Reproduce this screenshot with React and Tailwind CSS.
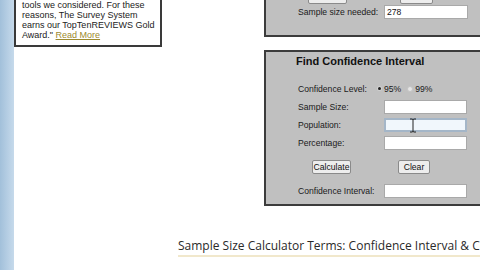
import React from "react";

function Btn({ children, className = "" }) {
  return (
    <div
      className={
        "h-[14px] flex items-center justify-center bg-[#ededed] border border-[#8a8a8a] rounded-[2px] text-[8.6px] text-[#111] " +
        className
      }
    >
      {children}
    </div>
  );
}

function Field({ focused = false, value = "" }) {
  return (
    <div
      className={
        "h-[14px] w-[83px] flex items-center pl-[2px] text-[8.6px] text-[#111] " +
        (focused
          ? "bg-[#f1f7fc] border-2 border-[#a4b6c8]"
          : "bg-white border border-[#a9a9a9]")
      }
    >
      {value}
    </div>
  );
}

function Row({ label, children, w = "w-[86px]" }) {
  return (
    <div className="flex items-center h-[18px]">
      <div className={"shrink-0 pl-[32px] box-content text-[8.6px] text-[#1a1a1a] whitespace-nowrap " + w}>
        {label}
      </div>
      {children}
    </div>
  );
}

export default function App() {
  return (
    <div className="w-[480px] h-[270px] overflow-hidden flex bg-white font-['Liberation_Sans',Arial,sans-serif] relative">
      <div className="w-[14px] shrink-0 bg-gradient-to-r from-[#a2c0da] via-[#b4cde3] to-[#c6daeb]" />
      <div className="w-[466px] shrink-0 overflow-hidden flex flex-col">
        <div className="flex items-start">
          <div className="w-[148px] h-[47px] shrink-0 border-l-2 border-r-2 border-b-2 border-[#3a3a3a] bg-white pl-[6px] pt-0 text-[9px] leading-[10px] text-[#222]">
            <div>tools we considered. For these</div>
            <div>reasons, The Survey System</div>
            <div>earns our TopTenREVIEWS Gold</div>
            <div>
              Award." <span className="text-[#9c8a2e] underline">Read More</span>
            </div>
          </div>
          <div className="ml-[102px] w-[260px] shrink-0 flex flex-col">
            {/* top panel */}
            <div className="h-[37px] bg-[#c0c0c0] border-l-2 border-b-2 border-[#3c3c3c] flex flex-col">
              <div className="flex mt-[-10px] h-[14px]">
                <Btn className="ml-[42px] w-[39px]">Calculate</Btn>
                <Btn className="ml-[53px] w-[33px]">Clear</Btn>
              </div>
              <div className="flex items-center mt-[1px] h-[14px]">
                <div className="w-[86px] shrink-0 pl-[32px] box-content text-[8.6px] text-[#1a1a1a] whitespace-nowrap">
                  Sample size needed:
                </div>
                <div className="h-[14px] w-[84px] bg-white border border-[#a9a9a9] flex items-center pl-[2px] text-[8.6px] text-[#111]">
                  278
                </div>
              </div>
            </div>
            {/* second panel */}
            <div className="mt-[13px] bg-[#c0c0c0] border-l-2 border-t-2 border-b-2 border-[#3c3c3c] pt-[2px] pb-[4px] flex flex-col">
              <div className="h-[14px] pl-[30px] flex items-center text-[11px] font-bold text-[#111]">
                Find Confidence Interval
              </div>
              <div className="h-[12px]" />
              <Row label="Confidence Level:" w="w-[79px]">
                <div className="flex items-center text-[8.6px] text-[#1a1a1a]">
                  <div className="w-[5px] h-[5px] rounded-full bg-[#d0d0d0] flex items-center justify-center">
                    <div className="w-[3px] h-[3px] rounded-full bg-[#222]" />
                  </div>
                  <span className="ml-[2px]">95%</span>
                  <div className="ml-[6px] w-[6px] h-[6px] rounded-full bg-[#e6e6e6] border border-[#c4c4c4]" />
                  <span className="ml-[2px]">99%</span>
                </div>
              </Row>
              <Row label="Sample Size:">
                <Field />
              </Row>
              <Row label="Population:">
                <Field focused />
              </Row>
              <Row label="Percentage:">
                <Field />
              </Row>
              <div className="h-[30px] flex items-center">
                <Btn className="ml-[46px] w-[39px]">Calculate</Btn>
                <Btn className="ml-[47px] w-[32px]">Clear</Btn>
              </div>
              <Row label="Confidence Interval:">
                <Field />
              </Row>
            </div>
          </div>
        </div>
        <div className="ml-[164px] mt-[33px] w-[400px] shrink-0 border-b-2 border-[#f1e8cc] pb-[2px]">
          <div className="h-[14px] leading-[14px] text-[12px] text-[#2a2a2a] whitespace-nowrap font-['Open_Sans',sans-serif]">
            Sample Size Calculator Terms: Confidence Interval &amp; Confidence Level
          </div>
        </div>
      </div>
      <svg
        className="absolute left-[409px] top-[118px]"
        width="8"
        height="15"
        viewBox="0 0 8 15"
      >
        <path d="M1 1 H3 Q4 1 4 2 Q4 1 5 1 H7 M4 2 V13 M1 14 H3 Q4 14 4 13 Q4 14 5 14 H7" stroke="#222" strokeWidth="1" fill="none" />
      </svg>
    </div>
  );
}
